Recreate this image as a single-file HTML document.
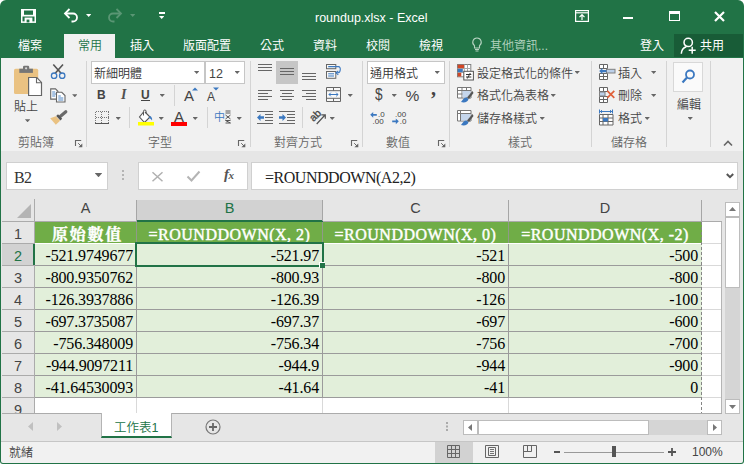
<!DOCTYPE html>
<html lang="zh-Hant"><head><meta charset="utf-8"><title>roundup.xlsx - Excel</title>
<style>
*{box-sizing:border-box;margin:0;padding:0}
html,body{width:744px;height:464px;overflow:hidden;background:#fff}
body{position:relative;font-family:"Liberation Sans","Noto Sans CJK TC",sans-serif;font-size:12px;color:#444;font-weight:350}
.a{position:absolute}
.t{position:absolute;white-space:nowrap;line-height:16px;height:16px}
.w{color:#fff;font-weight:400}
.dd{position:absolute;width:5.4px;height:3px;color:#666;background:currentColor;clip-path:polygon(0 0,100% 0,50% 100%)}
.gs{position:absolute;top:61px;width:1px;height:86px;background:#d4d4d4}
.ss{position:absolute;width:1px;background:#d4d4d4}
.gl{position:absolute;top:135px;height:16px;line-height:16px;color:#666;white-space:nowrap}
.cell{position:absolute;height:21px;line-height:21px;text-align:right;padding-right:3px;font-family:"Liberation Serif","Noto Serif CJK TC",serif;font-size:16px;color:#000;white-space:nowrap;letter-spacing:-0.15px}
.hd{position:absolute;height:21px;line-height:21px;text-align:center;font-family:"Liberation Serif","Noto Serif CJK TC",serif;font-size:16px;font-weight:bold;color:#fff;white-space:nowrap}
.hl{font-weight:400;-webkit-text-stroke:0.45px #fff}
.rn{position:absolute;left:2px;width:32px;height:21px;line-height:21px;text-align:center;font-size:14.5px;font-weight:400;color:#444}
.ch{position:absolute;top:198px;height:22px;line-height:21px;text-align:center;font-size:14.5px;font-weight:400;color:#444}
svg{position:absolute;overflow:visible}
</style></head><body>
<!-- window frame -->
<div class="a" id="frame" style="left:0;top:0;width:744px;height:464px;background:#217346;border-radius:6px 6px 3px 3px"></div>
<!-- title bar -->
<div class="t w" id="title" style="left:315px;top:10px;font-size:12.5px;">roundup.xlsx - Excel</div>
<!-- TABS -->
<div class="a" style="left:64px;top:34px;width:51px;height:25px;background:#f1f1f1"></div>
<div class="t w" style="left:18px;top:38px">檔案</div>
<div class="t" style="left:78px;top:38px;color:#217346">常用</div>
<div class="t w" style="left:130px;top:38px">插入</div>
<div class="t w" style="left:183px;top:38px">版面配置</div>
<div class="t w" style="left:260px;top:38px">公式</div>
<div class="t w" style="left:313px;top:38px">資料</div>
<div class="t w" style="left:366px;top:38px">校閱</div>
<div class="t w" style="left:419px;top:38px">檢視</div>
<div class="t" style="left:490px;top:38px;color:#b5d3c0">其他資訊...</div>
<div class="t w" style="left:640px;top:38px">登入</div>
<div class="a" style="left:674px;top:34px;width:69px;height:23px;background:#185c37"></div>
<div class="t w" style="left:700px;top:38px">共用</div>
<!-- RIBBON BG -->
<div class="a" id="ribbon" style="left:1px;top:58px;width:742px;height:93px;background:#f1f1f1"></div>
<div class="a" style="left:1px;top:151px;width:742px;height:1px;background:#d4d4d4"></div>
<!-- formula area bg -->
<div class="a" style="left:1px;top:151px;width:742px;height:290px;background:#e6e6e6"></div>
<!-- QAT -->
<svg style="left:20.500px;top:9px" width="15" height="14" viewBox="0 0 15 14"><rect x="0.750" y="0.750" width="13.500" height="12.400" fill="none" stroke="#fff" stroke-width="1.500"/><rect x="1" y="1" width="2" height="6" fill="#fff"/><rect x="12" y="1" width="2" height="6" fill="#fff"/><rect x="1" y="5.800" width="13" height="1.700" fill="#fff"/><rect x="3.600" y="8.600" width="7.800" height="4.800" fill="#fff"/><rect x="5.600" y="10.600" width="2.800" height="2.800" fill="#217346"/></svg>
<svg style="left:63px;top:8px" width="16" height="15" viewBox="0 0 16 15"><path d="M2 5.5h8a4 4 0 0 1 0 8H8.5" fill="none" stroke="#fff" stroke-width="1.8"/><path d="M6.5 1L2 5.5 6.5 10" fill="none" stroke="#fff" stroke-width="1.8"/></svg>
<div class="dd" style="left:86px;top:14px;color:#fff"></div>
<svg style="left:107px;top:8px" width="16" height="15" viewBox="0 0 16 15"><path d="M14 5.5H6a4 4 0 0 0 0 8h1.5" fill="none" stroke="#5a9674" stroke-width="1.8"/><path d="M9.500 1L14 5.5 9.500 10" fill="none" stroke="#5a9674" stroke-width="1.8"/></svg>
<div class="dd" style="left:130px;top:14px;color:#5a9674"></div>
<div class="a" style="left:159px;top:12px;width:6px;height:1.5px;background:#fff"></div>
<div class="dd" style="left:159px;top:16px;color:#fff"></div>
<!-- window buttons -->
<svg style="left:575px;top:10px" width="14" height="12" viewBox="0 0 14 12"><rect x="0.6" y="0.6" width="12.8" height="10.800" fill="none" stroke="#fff" stroke-width="1.2"/><path d="M0.6 2.800h12.8" stroke="#fff" stroke-width="1.200"/><path d="M7 10V5M4.500 7.200L7 4.700 9.500 7.200" fill="none" stroke="#fff" stroke-width="1.2"/></svg>
<div class="a" style="left:623px;top:17px;width:10px;height:2px;background:#fff"></div>
<div class="a" style="left:669px;top:11px;width:11px;height:10px;border:1.3px solid #fff;border-top-width:3px"></div>
<svg style="left:714px;top:11px" width="11" height="11" viewBox="0 0 11 11"><path d="M1 1l9 9M10 1l-9 9" stroke="#fff" stroke-width="2.200"/></svg>
<!-- lightbulb -->
<svg style="left:471px;top:37px" width="12" height="15" viewBox="0 0 12 15"><path d="M6 1a4.200 4.200 0 0 0-2.500 7.600V11h5V8.600A4.200 4.200 0 0 0 6 1z" fill="none" stroke="#b5d3c0" stroke-width="1.1"/><path d="M4 12.500h4M4.500 14h3" stroke="#b5d3c0" stroke-width="1"/></svg>
<!-- share person -->
<svg style="left:680px;top:37px" width="17" height="18" viewBox="0 0 17 18"><circle cx="8.200" cy="5.400" r="4.200" fill="none" stroke="#fff" stroke-width="1.500"/><path d="M1.300 16.800C1.500 12.800 3.500 10.600 6.300 9.700" fill="none" stroke="#fff" stroke-width="1.500"/><path d="M12.200 9.700v7M8.700 13.200h7" stroke="#fff" stroke-width="1.500"/></svg>

<!-- CLIPBOARD GROUP -->
<svg style="left:14px;top:65px" width="28" height="32" viewBox="0 0 28 32">
<rect x="0" y="3.700" width="24.200" height="25.300" rx="1.600" fill="#eac282"/>
<rect x="5.300" y="3.700" width="13.600" height="4.200" fill="#767676"/>
<rect x="9" y="0.700" width="6.200" height="4" rx="1.200" fill="#767676"/>
<circle cx="12.100" cy="3.300" r="1.100" fill="#d8d8d8"/>
<path d="M14.600 12.500h8.200l4.700 4.900v13.100h-12.900z" fill="#fff" stroke="#666" stroke-width="1.200"/>
<path d="M22.500 12.500v5.200h5" fill="none" stroke="#666" stroke-width="1.100"/>
</svg>
<div class="t" style="left:14px;top:99px;font-size:12px">貼上</div>
<div class="dd" style="left:24.900px;top:119.300px"></div>
<!-- scissors -->
<svg style="left:51px;top:64px" width="15" height="16" viewBox="0 0 15 16"><path d="M2.300 0.500L10.300 9.500M12 0.500L4 9.500" stroke="#555" stroke-width="1.600" fill="none"/><circle cx="3.100" cy="11.700" r="2.700" fill="none" stroke="#3b78c0" stroke-width="1.300"/><circle cx="11.200" cy="11.700" r="2.700" fill="none" stroke="#3b78c0" stroke-width="1.300"/></svg>
<!-- copy -->
<svg style="left:50px;top:87.500px" width="16" height="15" viewBox="0 0 16 15"><path d="M0.700 0.900h4.800l2.400 2.400v7.800h-7.200z" fill="#fff" stroke="#666" stroke-width="1.100"/><path d="M2.200 4h3M2.200 6h4M2.200 8h3" stroke="#3b78c0" stroke-width="0.900"/><path d="M6.500 4.300h5.300l3.200 3.200v6.500h-8.500z" fill="#fff" stroke="#666" stroke-width="1.100"/><path d="M8.300 8h2.500M8.300 10h5M8.300 12h5" stroke="#3b78c0" stroke-width="0.900"/></svg>
<div class="dd" style="left:72.100px;top:94.300px"></div>
<!-- format painter -->
<svg style="left:50px;top:110px" width="17" height="15" viewBox="0 0 17 15"><path d="M15.800 1.800L10.500 6.200" stroke="#6a6a6a" stroke-width="3.200" stroke-linecap="round"/><path d="M8 4.300l4.200 4.500-1.800 1.700L6.200 6z" fill="#555"/><path d="M5.800 6.300l4.300 4.500-4.300 3.900L0.200 8.200z" fill="#eac282"/></svg>
<div class="gl" style="left:18px">剪貼簿</div>
<svg class="launch" style="left:75px;top:140px" width="8" height="8" viewBox="0 0 8 8"><path d="M0.500 6V0.500H6.200" fill="none" stroke="#666" stroke-width="1.100"/><path d="M3.200 3.200L6.500 6.500" stroke="#666" stroke-width="1"/><path d="M7.300 3.400v3.900H3.400z" fill="#666"/></svg>
<div class="gs" style="left:86px"></div>

<!-- FONT GROUP -->
<div class="a" style="left:91px;top:61px;width:114px;height:23px;background:#fff;border:1px solid #c6c6c6"></div>
<div class="a" style="left:205px;top:61px;width:40px;height:23px;background:#fff;border:1px solid #c6c6c6"></div>
<div class="t" style="left:94px;top:66px;color:#333">新細明體</div>
<div class="dd" style="left:194px;top:71px"></div>
<div class="t" style="left:209px;top:66px;font-size:12.5px;color:#444">12</div>
<div class="dd" style="left:234.500px;top:71px"></div>
<div class="t" style="left:97px;top:87px;font-size:12px;font-weight:bold;color:#444">B</div>
<div class="t" style="left:121px;top:87px;font-size:14px;font-weight:bold;font-style:italic;font-family:'Liberation Serif',serif;color:#505050">I</div>
<div class="t" style="left:141px;top:87px;font-size:12px;font-weight:bold;color:#444">U</div>
<div class="a" style="left:141px;top:100px;width:9px;height:1px;background:#444"></div>
<div class="dd" style="left:159.500px;top:94px"></div>
<div class="ss" style="left:174px;top:85px;height:21px"></div>
<div class="t" style="left:184px;top:88px;font-size:15px;color:#444">A</div>
<svg style="left:192px;top:87px" width="6" height="4" viewBox="0 0 6 4"><path d="M0 3.500L3 0.500 6 3.500z" fill="#3b78c0"/></svg>
<div class="t" style="left:207px;top:89px;font-size:12px;color:#444">A</div>
<svg style="left:213px;top:87px" width="6" height="4" viewBox="0 0 6 4"><path d="M0 0.500L3 3.500 6 0.500z" fill="#3b78c0"/></svg>
<!-- borders -->
<svg style="left:95px;top:111px" width="14" height="13" viewBox="0 0 14 13"><path d="M0.500 0.500h13M0.500 6.500h13M0.500 0.500v12M6.500 0.500v12M13.500 0.500v12" fill="none" stroke="#777" stroke-width="1" stroke-dasharray="1 1" shape-rendering="crispEdges"/><path d="M0 12.500h14" stroke="#555" stroke-width="1" shape-rendering="crispEdges"/></svg>
<div class="dd" style="left:115.500px;top:117px"></div>
<div class="ss" style="left:129px;top:107px;height:21px"></div>
<!-- fill -->
<svg style="left:138px;top:108px" width="16" height="18" viewBox="0 0 16 18"><g transform="translate(0,1.500)"><path d="M5.500 2.500L1.500 7.500l5 5.500 5.500-5.500L7 2.500" fill="#fff" stroke="#555" stroke-width="1.100"/><path d="M5.500 6V1.800a1.300 1.300 0 0 1 2.600 0V4" fill="none" stroke="#555" stroke-width="1"/><path d="M12 6.500c1.800 1 2.500 2.500 2 4.500-1-1.500-2-2.300-3.500-2.500z" fill="#3b78c0"/></g><rect x="0" y="14" width="16" height="3.500" fill="#ffff00"/></svg>
<div class="dd" style="left:158.500px;top:117px"></div>
<!-- font color -->
<div class="t" style="left:174px;top:109px;font-size:15px;color:#444">A</div>
<div class="a" style="left:171px;top:122px;width:16px;height:3.500px;background:#ff0000"></div>
<div class="dd" style="left:192.500px;top:117px"></div>
<div class="ss" style="left:207px;top:107px;height:21px"></div>
<!-- phonetic -->
<div class="t" style="left:214px;top:109px;font-size:11px;color:#3b78c0">中</div>
<svg style="left:225px;top:110px" width="6" height="14" viewBox="0 0 6 14"><path d="M0.500 1h5M0.500 3h5M0.500 5L5.500 9M5.500 5L0.500 9M0.500 13h5L0.500 10.500h5" fill="none" stroke="#555" stroke-width="1"/></svg>
<div class="dd" style="left:236.500px;top:117px"></div>
<div class="gl" style="left:148px">字型</div>
<svg style="left:238px;top:140px" width="8" height="8" viewBox="0 0 8 8"><path d="M0.500 6V0.500H6.200" fill="none" stroke="#666" stroke-width="1.100"/><path d="M3.200 3.200L6.500 6.500" stroke="#666" stroke-width="1"/><path d="M7.300 3.400v3.900H3.400z" fill="#666"/></svg>
<div class="gs" style="left:250px"></div>

<!-- ALIGN GROUP -->
<div class="a" style="left:276px;top:61px;width:22px;height:23px;background:#c6c6c6"></div>
<svg style="left:258px;top:64px" width="14" height="8" viewBox="0 0 14 8"><path d="M0 0.500h14M0 3.500h14M0 6.500h14" stroke="#666" stroke-width="1"/></svg>
<svg style="left:280px;top:68px" width="14" height="8" viewBox="0 0 14 8"><path d="M0 0.500h14M0 3.500h14M0 6.500h14" stroke="#666" stroke-width="1"/></svg>
<svg style="left:302px;top:73px" width="14" height="8" viewBox="0 0 14 8"><path d="M0 0.500h14M0 3.500h14M0 6.500h14" stroke="#666" stroke-width="1"/></svg>
<!-- wrap text -->
<svg style="left:326px;top:64px" width="16" height="15" viewBox="0 0 16 15"><rect x="0.500" y="0.500" width="9.300" height="4.200" fill="#f8f8f8" stroke="#666" stroke-width="1"/><rect x="0.500" y="7.500" width="9.300" height="6.800" fill="#f8f8f8" stroke="#666" stroke-width="1"/><path d="M2.200 2.600h10.300c2.500 0 2.500 6.200-0.800 6.200h-1.500" fill="none" stroke="#3b78c0" stroke-width="1.100"/><path d="M12.300 6.800l-2.300 2 2.300 2" fill="none" stroke="#3b78c0" stroke-width="1.100"/><path d="M2.200 9.800h5.800M2.200 12h5.800" stroke="#3b78c0" stroke-width="1"/></svg>
<!-- row 2 aligns -->
<svg style="left:258px;top:90px" width="14" height="11" viewBox="0 0 14 11"><path d="M0 0.500h14M0 3.500h10M0 6.500h14M0 9.500h10" stroke="#666" stroke-width="1"/></svg>
<svg style="left:280px;top:90px" width="14" height="11" viewBox="0 0 14 11"><path d="M0 0.500h14M2 3.500h10M0 6.500h14M2 9.500h10" stroke="#666" stroke-width="1"/></svg>
<svg style="left:302px;top:90px" width="14" height="11" viewBox="0 0 14 11"><path d="M0 0.500h14M4 3.500h10M0 6.500h14M4 9.500h10" stroke="#666" stroke-width="1"/></svg>
<!-- merge -->
<svg style="left:326px;top:87px" width="15" height="15" viewBox="0 0 15 15"><path d="M0.500 0.500h14v14h-14zM0.500 3.700h14M0.500 11.300h14M7.500 0.500v3.200M7.500 11.300v3.200" fill="#f8f8f8" stroke="#666" stroke-width="1"/><path d="M3 7.500h9M4.800 5.700L3 7.500l1.800 1.800M10.200 5.700L12 7.500l-1.800 1.800" fill="none" stroke="#3b78c0" stroke-width="1"/></svg>
<div class="dd" style="left:347.500px;top:94px"></div>
<!-- indent -->
<svg style="left:257px;top:111px" width="16" height="13" viewBox="0 0 16 13"><path d="M0 0.500h16M8 3.500h8M8 6.500h8M8 9.500h8M0 12.500h16" stroke="#666" stroke-width="1"/><path d="M0 6.500L3.500 3v2.300H7v2.400H3.500V10z" fill="#3b78c0"/></svg>
<svg style="left:279px;top:111px" width="16" height="13" viewBox="0 0 16 13"><path d="M0 0.500h16M8 3.500h8M8 6.500h8M8 9.500h8M0 12.500h16" stroke="#666" stroke-width="1"/><path d="M7 6.500L3.500 3v2.300H0v2.400h3.500V10z" fill="#3b78c0"/></svg>
<div class="ss" style="left:302px;top:107px;height:21px"></div>
<!-- orientation -->
<svg style="left:310px;top:109px" width="17" height="16" viewBox="0 0 17 16"><text x="2.500" y="11.500" font-size="10.500" font-family="Liberation Sans" fill="#444" stroke="#444" stroke-width="0.300" transform="rotate(-45 5 11)">ab</text><path d="M6.700 15L15 6M11.300 5.800h4v4" fill="none" stroke="#555" stroke-width="1.200"/></svg>
<div class="dd" style="left:329.500px;top:117px"></div>
<div class="gl" style="left:274px">對齊方式</div>
<svg style="left:351px;top:140px" width="8" height="8" viewBox="0 0 8 8"><path d="M0.500 6V0.500H6.200" fill="none" stroke="#666" stroke-width="1.100"/><path d="M3.200 3.200L6.500 6.500" stroke="#666" stroke-width="1"/><path d="M7.300 3.400v3.900H3.400z" fill="#666"/></svg>
<div class="gs" style="left:362px"></div>

<!-- NUMBER GROUP -->
<div class="a" style="left:367px;top:61px;width:78px;height:23px;background:#fff;border:1px solid #c6c6c6"></div>
<div class="t" style="left:370px;top:66px;color:#333">通用格式</div>
<div class="dd" style="left:434.500px;top:71px"></div>
<div class="t" style="left:374.500px;top:87px;font-size:17px;color:#444;transform:scaleX(.8);transform-origin:0 0">$</div>
<div class="dd" style="left:391.500px;top:94px"></div>
<div class="t" style="left:405.500px;top:88px;font-size:15.500px;color:#444">%</div>
<div class="t" style="left:431px;top:80px;font-size:20px;font-weight:bold;color:#444;font-family:'Liberation Serif',serif">,</div>
<svg style="left:370px;top:110px" width="16" height="15" viewBox="0 0 16 15"><path d="M0.200 4.800L3.200 1.900v2h3.600v1.800H3.200v2z" fill="#3b78c0"/><text x="8" y="7" font-size="8" font-family="Liberation Sans" fill="#444">.0</text><text x="2.600" y="14" font-size="8" font-family="Liberation Sans" fill="#444">.00</text></svg>
<svg style="left:392px;top:110px" width="16" height="15" viewBox="0 0 16 15"><text x="3" y="7" font-size="8" font-family="Liberation Sans" fill="#444">.00</text><path d="M6.800 11.300L3.800 8.400v2H0.200v1.800h3.600v2z" fill="#3b78c0"/><text x="7.700" y="14" font-size="8" font-family="Liberation Sans" fill="#444">.0</text></svg>
<div class="gl" style="left:386px">數值</div>
<svg style="left:438px;top:140px" width="8" height="8" viewBox="0 0 8 8"><path d="M0.500 6V0.500H6.200" fill="none" stroke="#666" stroke-width="1.100"/><path d="M3.200 3.200L6.500 6.500" stroke="#666" stroke-width="1"/><path d="M7.300 3.400v3.900H3.400z" fill="#666"/></svg>
<div class="gs" style="left:449px"></div>

<!-- STYLES GROUP -->
<svg style="left:457px;top:64px" width="17" height="17" viewBox="0 0 17 17"><rect x="0.500" y="0.500" width="13.300" height="12.300" fill="#fff" stroke="#808080" stroke-width="1"/><path d="M0.500 4.500h13.300M0.500 8.500h13.300M7.300 0.500v12.300M10.500 0.500v8" stroke="#a8a8a8" stroke-width="1" fill="none"/><rect x="0.800" y="0.800" width="6.200" height="3.400" fill="#d24726"/><rect x="0.800" y="4.900" width="5" height="3.200" fill="#3b78c0"/><rect x="0.800" y="8.900" width="3.500" height="3.600" fill="#d24726"/><rect x="6.800" y="7.300" width="9.600" height="8.700" fill="#fff" stroke="#555" stroke-width="1"/><path d="M9 10.500h5.300M9 13h5.300M13.300 9l-3 5.500" stroke="#333" stroke-width="1" fill="none"/></svg>
<div class="t" style="left:477px;top:66px">設定格式化的條件</div>
<div class="dd" style="left:574.500px;top:71px"></div>
<svg style="left:457px;top:87px" width="17" height="16" viewBox="0 0 17 16"><path d="M0.500 0.500h13.500v10.500h-13.500z" fill="#fff" stroke="#777" stroke-width="1"/><path d="M0.500 3.500h13.500M0.500 7h13.500M5 0.500v10.500M9.500 0.500v10.500" stroke="#777" stroke-width="1" fill="none"/><rect x="5.500" y="4" width="8" height="6.500" fill="#c5d6ec"/><path d="M15.500 4L10 10.500l2 1.500 4.500-6z" fill="#555"/><path d="M9.500 10.500c-2.500 0-3.500 2-5.500 4.500 3.500 1 7 0 7.500-3z" fill="#3b78c0"/></svg>
<div class="t" style="left:477px;top:88px">格式化為表格</div>
<div class="dd" style="left:550.500px;top:94px"></div>
<svg style="left:457px;top:110px" width="17" height="16" viewBox="0 0 17 16"><path d="M0.500 0.500h13.500v10.500h-13.500z" fill="#fff" stroke="#777" stroke-width="1"/><path d="M0.500 3.500h13.500M3.500 0.500v10.500" stroke="#777" stroke-width="1" fill="none"/><rect x="4" y="4" width="9.500" height="6.500" fill="#c5d6ec"/><path d="M15.500 4L10 10.500l2 1.500 4.500-6z" fill="#555"/><path d="M9.500 10.500c-2.500 0-3.500 2-5.500 4.500 3.500 1 7 0 7.500-3z" fill="#3b78c0"/></svg>
<div class="t" style="left:477px;top:111px">儲存格樣式</div>
<div class="dd" style="left:539.500px;top:117px"></div>
<div class="gl" style="left:508px">樣式</div>
<div class="gs" style="left:591px"></div>

<!-- CELLS GROUP -->
<svg style="left:599px;top:64px" width="17" height="16" viewBox="0 0 17 16"><path d="M0.500 0.500h8v4h-8zM4.500 0.500v4M0.500 9.500h8v6h-8zM0.500 12.500h8M4.500 9.500v6" fill="#fff" stroke="#666" stroke-width="1"/><rect x="7.500" y="5.300" width="8.500" height="3.700" fill="#bcd0ea" stroke="#808080" stroke-width="1"/><path d="M0.200 7.100L3.400 4v2h4v2.200h-4v2z" fill="#3b78c0"/></svg>
<div class="t" style="left:618px;top:66px">插入</div>
<div class="dd" style="left:651px;top:71px"></div>
<svg style="left:599px;top:87px" width="17" height="16" viewBox="0 0 17 16"><path d="M0.500 0.500h8v4h-8zM4.500 0.500v4M0.500 9.500h8v6h-8zM0.500 12.500h8M4.500 9.500v6" fill="#fff" stroke="#666" stroke-width="1"/><rect x="0.500" y="5" width="5.500" height="4" fill="#bcd0ea" stroke="#808080" stroke-width="1"/><path d="M8.300 3.800l7 7M15.300 3.800l-7 7" stroke="#e0603a" stroke-width="1.700" fill="none"/></svg>
<div class="t" style="left:618px;top:88px">刪除</div>
<div class="dd" style="left:651px;top:94px"></div>
<svg style="left:599px;top:109px" width="16" height="17" viewBox="0 0 16 17"><path d="M1 2.500h12M0.500 0.500v4M13.500 0.500v4" stroke="#3b78c0" stroke-width="1" fill="none"/><path d="M3 1l-1.500 1.500L3 4M11 1l1.500 1.500L11 4" stroke="#3b78c0" stroke-width="0.900" fill="none"/><path d="M0.500 5.500h13.500v10.500h-13.500zM0.500 9h13.500M0.500 12.500h13.500M4 5.500v10.500M9 5.500v10.500" fill="#fff" stroke="#666" stroke-width="1"/><rect x="4" y="9" width="5" height="3.500" fill="#3b78c0"/></svg>
<div class="t" style="left:618px;top:111px">格式</div>
<div class="dd" style="left:644.500px;top:117px"></div>
<div class="gl" style="left:611px">儲存格</div>
<div class="gs" style="left:666px"></div>

<!-- EDIT GROUP -->
<div class="a" style="left:673px;top:62px;width:30px;height:30px;background:#fafafa;border:1px solid #d8d8d8"></div>
<svg style="left:681px;top:69px" width="15" height="15" viewBox="0 0 15 15"><circle cx="9" cy="5.500" r="4" fill="none" stroke="#3b78c0" stroke-width="1.800"/><path d="M6 8.500L1.500 13.500" stroke="#3b78c0" stroke-width="2.200"/></svg>
<div class="t" style="left:677px;top:97px">編輯</div>
<div class="dd" style="left:687.500px;top:117px"></div>
<div class="gs" style="left:710px"></div>
<svg style="left:723px;top:140px" width="10" height="6" viewBox="0 0 10 6"><path d="M1 5.500L5 1.500 9 5.500" fill="none" stroke="#666" stroke-width="1.600"/></svg>

<!--RIBBONCONTENT-->
<!--FORMULABAR-->
<!--GRIDSTART-->
<!-- FORMULA BAR -->
<div class="a" style="left:6px;top:162px;width:102px;height:28px;background:#fff;border:1px solid #d0d0d0"></div>
<div class="t" id="nb" style="left:14px;top:170px;font-size:16px;letter-spacing:-0.7px;color:#333;font-weight:400;font-family:'Liberation Serif',serif">B2</div>
<div class="dd" style="left:94.7px;top:173px;width:7.6px;height:4.2px;color:#666"></div>
<div class="a" style="left:122px;top:170px;width:2px;height:2px;background:#b4b4b4;box-shadow:0 4px 0 #b4b4b4,0 8px 0 #b4b4b4"></div>
<div class="a" style="left:138px;top:162px;width:110px;height:28px;background:#fff;border:1px solid #d0d0d0"></div>
<svg style="left:151.500px;top:171.500px" width="11" height="9.500" viewBox="0 0 11 9.500"><path d="M0.500 0.300l10 9M10.500 0.300l-10 9" stroke="#b0b0b0" stroke-width="1.500"/></svg>
<svg style="left:187px;top:171px" width="13" height="10.500" viewBox="0 0 13 10.500"><path d="M0.500 5.500l4 4L12.500 0.500" fill="none" stroke="#b4b4b4" stroke-width="2"/></svg>
<div class="t" style="left:224px;top:166px;font-size:15px;font-style:italic;font-weight:bold;font-family:'Liberation Serif',serif;color:#555;letter-spacing:-0.5px">f<span style="font-size:11px">x</span></div>
<div class="a" style="left:251px;top:162px;width:487px;height:28px;background:#fff;border:1px solid #d0d0d0"></div>
<div class="t" style="left:265px;top:170px;font-size:16px;letter-spacing:-0.47px;color:#222;font-weight:400;font-family:'Liberation Serif',serif" id="ftext">=ROUNDDOWN(A2,2)</div>
<svg style="left:725.500px;top:172.500px" width="8" height="6" viewBox="0 0 8 6"><path d="M0.800 1L4 4.200 7.200 1" fill="none" stroke="#555" stroke-width="2"/></svg>
<!-- GRID -->
<div class="a" style="left:2px;top:199px;width:720px;height:214px;background:#fff"></div>
<div class="a" style="left:2px;top:199px;width:720px;height:22px;background:#e6e6e6"></div>
<div class="a" style="left:2px;top:221px;width:720px;height:1px;background:#ababab"></div>
<div class="a" style="left:2px;top:222px;width:32px;height:191px;background:#e6e6e6"></div>
<div class="a" style="left:34px;top:199px;width:1px;height:214px;background:#ababab"></div>
<svg style="left:17px;top:204px" width="14" height="14" viewBox="0 0 14 14"><path d="M14 0v14H0z" fill="#b4b4b4"/></svg>
<div class="a" style="left:137px;top:200px;width:185px;height:20px;background:#d2d2d2"></div>
<div class="a" style="left:137px;top:220px;width:186px;height:2px;background:#217346"></div>
<div class="ch" style="left:35px;width:101px;color:#444">A</div>
<div class="a" style="left:136px;top:200px;width:1px;height:21px;background:#a6a6a6"></div>
<div class="ch" style="left:137px;width:185px;color:#217346">B</div>
<div class="a" style="left:322px;top:200px;width:1px;height:21px;background:#a6a6a6"></div>
<div class="ch" style="left:323px;width:185px;color:#444">C</div>
<div class="a" style="left:508px;top:200px;width:1px;height:21px;background:#a6a6a6"></div>
<div class="ch" style="left:509px;width:192px;color:#444">D</div>
<div class="a" style="left:701px;top:200px;width:1px;height:21px;background:#a6a6a6"></div>
<div class="a" style="left:2px;top:244px;width:31px;height:21px;background:#d2d2d2"></div>
<div class="a" style="left:33px;top:244px;width:2px;height:21px;background:#217346"></div>
<div class="rn" style="top:224px;color:#444">1</div>
<div class="a" style="left:2px;top:243px;width:32px;height:1px;background:#ababab"></div>
<div class="rn" style="top:246px;color:#217346">2</div>
<div class="a" style="left:2px;top:265px;width:32px;height:1px;background:#ababab"></div>
<div class="rn" style="top:268px;color:#444">3</div>
<div class="a" style="left:2px;top:287px;width:32px;height:1px;background:#ababab"></div>
<div class="rn" style="top:290px;color:#444">4</div>
<div class="a" style="left:2px;top:309px;width:32px;height:1px;background:#ababab"></div>
<div class="rn" style="top:312px;color:#444">5</div>
<div class="a" style="left:2px;top:331px;width:32px;height:1px;background:#ababab"></div>
<div class="rn" style="top:334px;color:#444">6</div>
<div class="a" style="left:2px;top:353px;width:32px;height:1px;background:#ababab"></div>
<div class="rn" style="top:356px;color:#444">7</div>
<div class="a" style="left:2px;top:375px;width:32px;height:1px;background:#ababab"></div>
<div class="rn" style="top:378px;color:#444">8</div>
<div class="a" style="left:2px;top:397px;width:32px;height:1px;background:#ababab"></div>
<div class="rn" style="top:400px;color:#444">9</div>
<div class="a" style="left:35px;top:222px;width:667px;height:21px;background:#70ad47"></div>
<div class="a" style="left:35px;top:244px;width:667px;height:153px;background:#e2efda"></div>
<div class="a" style="left:702px;top:243px;width:19px;height:1px;background:#d9d9d9"></div>
<div class="a" style="left:702px;top:265px;width:19px;height:1px;background:#d9d9d9"></div>
<div class="a" style="left:702px;top:287px;width:19px;height:1px;background:#d9d9d9"></div>
<div class="a" style="left:702px;top:309px;width:19px;height:1px;background:#d9d9d9"></div>
<div class="a" style="left:702px;top:331px;width:19px;height:1px;background:#d9d9d9"></div>
<div class="a" style="left:702px;top:353px;width:19px;height:1px;background:#d9d9d9"></div>
<div class="a" style="left:702px;top:375px;width:19px;height:1px;background:#d9d9d9"></div>
<div class="a" style="left:702px;top:397px;width:19px;height:1px;background:#d9d9d9"></div>
<div class="a" style="left:136px;top:398px;width:1px;height:15px;background:#d9d9d9"></div>
<div class="a" style="left:322px;top:398px;width:1px;height:15px;background:#d9d9d9"></div>
<div class="a" style="left:508px;top:398px;width:1px;height:15px;background:#d9d9d9"></div>
<div class="a" style="left:35px;top:265px;width:667px;height:1px;background:#9b9b9b"></div>
<div class="a" style="left:35px;top:287px;width:667px;height:1px;background:#9b9b9b"></div>
<div class="a" style="left:35px;top:309px;width:667px;height:1px;background:#9b9b9b"></div>
<div class="a" style="left:35px;top:331px;width:667px;height:1px;background:#9b9b9b"></div>
<div class="a" style="left:35px;top:353px;width:667px;height:1px;background:#9b9b9b"></div>
<div class="a" style="left:35px;top:375px;width:667px;height:1px;background:#9b9b9b"></div>
<div class="a" style="left:35px;top:397px;width:667px;height:1px;background:#9b9b9b"></div>
<div class="a" style="left:136px;top:244px;width:1px;height:154px;background:#9b9b9b"></div>
<div class="a" style="left:136px;top:222px;width:1px;height:21px;background:#8f9a88"></div>
<div class="a" style="left:322px;top:244px;width:1px;height:154px;background:#9b9b9b"></div>
<div class="a" style="left:322px;top:222px;width:1px;height:21px;background:#8f9a88"></div>
<div class="a" style="left:508px;top:244px;width:1px;height:154px;background:#9b9b9b"></div>
<div class="a" style="left:508px;top:222px;width:1px;height:21px;background:#8f9a88"></div>
<div class="a" style="left:701px;top:222px;width:1px;height:191px;background:repeating-linear-gradient(to bottom,#858585 0,#858585 3px,transparent 3px,transparent 5px)"></div>
<div class="hd" style="left:37px;top:224px;width:101px;letter-spacing:1.7px;-webkit-text-stroke:0.35px #fff">原始數值</div>
<div class="hd hl" style="left:137px;top:224px;width:185px;letter-spacing:0.5px">=ROUNDDOWN(X, 2)</div>
<div class="hd hl" style="left:323px;top:224px;width:185px;letter-spacing:0.5px">=ROUNDDOWN(X, 0)</div>
<div class="hd hl" style="left:509px;top:224px;width:192px;letter-spacing:0.5px">=ROUNDDOWN(X, -2)</div>
<div class="cell" style="left:35px;top:245px;width:101px">-521.9749677</div>
<div class="cell" style="left:137px;top:245px;width:185px">-521.97</div>
<div class="cell" style="left:323px;top:245px;width:185px">-521</div>
<div class="cell" style="left:509px;top:245px;width:192px">-500</div>
<div class="cell" style="left:35px;top:267px;width:101px">-800.9350762</div>
<div class="cell" style="left:137px;top:267px;width:185px">-800.93</div>
<div class="cell" style="left:323px;top:267px;width:185px">-800</div>
<div class="cell" style="left:509px;top:267px;width:192px">-800</div>
<div class="cell" style="left:35px;top:289px;width:101px">-126.3937886</div>
<div class="cell" style="left:137px;top:289px;width:185px">-126.39</div>
<div class="cell" style="left:323px;top:289px;width:185px">-126</div>
<div class="cell" style="left:509px;top:289px;width:192px">-100</div>
<div class="cell" style="left:35px;top:311px;width:101px">-697.3735087</div>
<div class="cell" style="left:137px;top:311px;width:185px">-697.37</div>
<div class="cell" style="left:323px;top:311px;width:185px">-697</div>
<div class="cell" style="left:509px;top:311px;width:192px">-600</div>
<div class="cell" style="left:35px;top:333px;width:101px">-756.348009</div>
<div class="cell" style="left:137px;top:333px;width:185px">-756.34</div>
<div class="cell" style="left:323px;top:333px;width:185px">-756</div>
<div class="cell" style="left:509px;top:333px;width:192px">-700</div>
<div class="cell" style="left:35px;top:355px;width:101px">-944.9097211</div>
<div class="cell" style="left:137px;top:355px;width:185px">-944.9</div>
<div class="cell" style="left:323px;top:355px;width:185px">-944</div>
<div class="cell" style="left:509px;top:355px;width:192px">-900</div>
<div class="cell" style="left:35px;top:377px;width:101px">-41.64530093</div>
<div class="cell" style="left:137px;top:377px;width:185px">-41.64</div>
<div class="cell" style="left:323px;top:377px;width:185px">-41</div>
<div class="cell" style="left:509px;top:377px;width:192px">0</div>
<div class="a" style="left:135px;top:242px;width:189px;height:25px;border:2px solid #217346"></div>
<div class="a" style="left:319px;top:262px;width:5px;height:5px;background:#217346;border:1px solid #fff;border-right:0;border-bottom:0;box-sizing:content-box"></div>
<div class="a" style="left:2px;top:413px;width:720px;height:1px;background:#ababab"></div>
<div class="a" style="left:721px;top:222px;width:1px;height:191px;background:#b4b4b4"></div>
<!-- VSCROLL -->
<div class="a" style="left:725px;top:217px;width:15px;height:183px;background:#d5d5d5"></div>
<div class="a" style="left:725px;top:202px;width:15px;height:15px;background:#fff;border:1px solid #bcbcbc"></div>
<svg style="left:729px;top:207px" width="7" height="4" viewBox="0 0 7 4"><path d="M0 4L3.500 0 7 4z" fill="#777"/></svg>
<div class="a" style="left:725px;top:217px;width:15px;height:71px;background:#fff;border:1px solid #bcbcbc"></div>
<div class="a" style="left:725px;top:399px;width:15px;height:15px;background:#fff;border:1px solid #bcbcbc"></div>
<svg style="left:729px;top:405px" width="7" height="4" viewBox="0 0 7 4"><path d="M0 0L3.500 4 7 0z" fill="#777"/></svg>
<!-- TABBAR -->
<div class="a" style="left:1px;top:414px;width:723px;height:27px;background:#e6e6e6"></div>
<svg style="left:28px;top:422px" width="5" height="9" viewBox="0 0 5 9"><path d="M5 0v9L0 4.500z" fill="#c0c0c0"/></svg>
<svg style="left:57px;top:422px" width="5" height="9" viewBox="0 0 5 9"><path d="M0 0v9L5 4.500z" fill="#c0c0c0"/></svg>
<div class="a" style="left:101px;top:413px;width:71px;height:25px;background:#fff;border-left:1px solid #b4b4b4;border-right:1px solid #b4b4b4;border-bottom:2px solid #217346"></div>
<div class="t" style="left:114px;top:420px;font-size:12.5px;color:#217346">工作表1</div>
<svg style="left:205px;top:418.700px" width="16" height="16" viewBox="0 0 16 16"><circle cx="8" cy="8" r="7" fill="none" stroke="#777" stroke-width="1.200"/><path d="M8 4v8M4 8h8" stroke="#666" stroke-width="1.800"/></svg>
<div class="a" style="left:446px;top:422px;width:1.5px;height:1.5px;background:#aaa;box-shadow:0 3.5px 0 #aaa,0 7px 0 #aaa"></div>
<div class="a" style="left:463px;top:420px;width:259px;height:15px;background:#d5d5d5"></div>
<div class="a" style="left:463px;top:420px;width:15px;height:15px;background:#fff;border:1px solid #bcbcbc"></div>
<svg style="left:468px;top:424px" width="4" height="7" viewBox="0 0 4 7"><path d="M4 0v7L0 3.500z" fill="#777"/></svg>
<div class="a" style="left:478px;top:420px;width:171px;height:15px;background:#fff;border:1px solid #bcbcbc"></div>
<div class="a" style="left:707px;top:420px;width:15px;height:15px;background:#fff;border:1px solid #bcbcbc"></div>
<svg style="left:713px;top:424px" width="4" height="7" viewBox="0 0 4 7"><path d="M0 0v7L4 3.500z" fill="#777"/></svg>
<!-- STATUS -->
<div class="a" style="left:1px;top:441px;width:742px;height:1px;background:#c6c6c6"></div>
<div class="a" style="left:1px;top:442px;width:742px;height:21px;background:#f1f1f1;border-radius:0 0 2px 2px"></div>
<div class="t" style="left:9px;top:445px">就緒</div>
<div class="a" style="left:435px;top:442px;width:38px;height:21px;background:#d2d2d2"></div>
<svg style="left:447px;top:445px" width="14" height="13" viewBox="0 0 14 13"><path d="M0.500 0.500h12v12h-12zM0.500 4.500h12M0.500 8.500h12M4.500 0.500v12M8.500 0.500v12" fill="none" stroke="#666" stroke-width="1"/></svg>
<svg style="left:485px;top:445px" width="14" height="13" viewBox="0 0 14 13"><path d="M0.500 0.500h13v12h-13z" fill="none" stroke="#666" stroke-width="1"/><path d="M3.500 2.500h7v8h-7z" fill="none" stroke="#666" stroke-width="1"/><path d="M5 4.500h4M5 6.500h4M5 8.500h4" fill="none" stroke="#666" stroke-width="0.900"/></svg>
<svg style="left:523px;top:445px" width="14" height="13" viewBox="0 0 14 13"><path d="M0.500 0.500h13v12h-13z" fill="none" stroke="#666" stroke-width="1"/><path d="M4.500 0.500v6M8.500 0.500v6M0.500 6.500h8" fill="none" stroke="#666" stroke-width="1"/></svg>
<div class="a" style="left:554px;top:451px;width:6px;height:2px;background:#555"></div>
<div class="a" style="left:564px;top:451.500px;width:100px;height:1px;background:#999"></div>
<div class="a" style="left:612px;top:446px;width:4px;height:11px;background:#555"></div>
<svg style="left:667px;top:447px" width="10" height="10" viewBox="0 0 10 10"><path d="M5 1v8M1 5h8" stroke="#555" stroke-width="1.800"/></svg>
<div class="t" style="left:692px;top:444px;font-size:12px">100%</div>
<!--GRIDEND-->
<!--BOTTOM-->
</body></html>
